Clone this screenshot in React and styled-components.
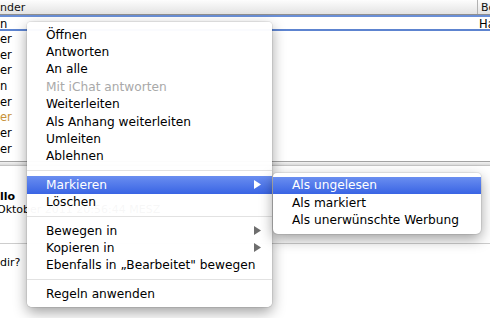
import React from 'react'
import styled, { createGlobalStyle } from 'styled-components'

const GlobalStyle = createGlobalStyle`
  html, body {
    margin: 0;
    padding: 0;
    background: #fff;
  }
  body {
    font-family: "DejaVu Sans", "Liberation Sans", sans-serif;
    overflow: hidden;
  }
`

const rows = [
  { from: 'n', subject: 'Ha', selected: true },
  { from: 'er' },
  { from: 'er' },
  { from: 'er' },
  { from: 'n' },
  { from: 'er' },
  { from: 'er', color: '#c8923a' },
  { from: 'er' },
  { from: 'er' },
]

const menu = [
  { label: 'Öffnen' },
  { label: 'Antworten' },
  { label: 'An alle' },
  { label: 'Mit iChat antworten', disabled: true },
  { label: 'Weiterleiten' },
  { label: 'Als Anhang weiterleiten' },
  { label: 'Umleiten' },
  { label: 'Ablehnen' },
  { sep: true },
  { label: 'Markieren', sub: true, active: true },
  { label: 'Löschen' },
  { sep: true },
  { label: 'Bewegen in', sub: true },
  { label: 'Kopieren in', sub: true },
  { label: 'Ebenfalls in „Bearbeitet" bewegen' },
  { sep: true },
  { label: 'Regeln anwenden' },
]

const submenu = [
  { label: 'Als ungelesen', active: true },
  { label: 'Als markiert' },
  { label: 'Als unerwünschte Werbung' },
]

const Window = styled.div`
  position: relative;
  width: 490px;
  height: 318px;
  overflow: hidden;
  background: #fff;
  display: flex;
  flex-direction: column;
`

const Header = styled.div`
  display: grid;
  grid-template-columns: 477px 1fr;
  height: 14px;
  background: linear-gradient(#fdfdfd, #e3e3e3);
  border-bottom: 1px solid #8f8f8f;
  font-size: 11px;
  color: #111;
`

const HeaderCell = styled.div`
  display: flex;
  align-items: center;
  padding-left: ${(p) => (p.$divider ? 3 : 0)}px;
  border-left: ${(p) => (p.$divider ? '1px solid #b2b2b2' : 'none')};
  overflow: hidden;
  white-space: nowrap;
`

const List = styled.div`
  height: 146px;
  display: flex;
  flex-direction: column;
`

const Row = styled.div`
  box-sizing: border-box;
  display: grid;
  grid-template-columns: 479px 1fr;
  align-items: center;
  height: ${(p) => (p.$selected ? 16 : 15.7)}px;
  font-size: 11.5px;
  color: ${(p) => p.$color || '#000'};
  border-top: ${(p) => (p.$selected ? '2px solid #6a8fd6' : 'none')};
  border-bottom: ${(p) => (p.$selected ? '2px solid #5d84d0' : 'none')};
  white-space: nowrap;
  overflow: hidden;
`

const Splitter = styled.div`
  height: 3px;
  border-top: 1px solid #a2a2a2;
  border-bottom: 1px solid #c4c4c4;
  background: linear-gradient(#f2f2f2, #dadada);
`

const Preview = styled.div`
  display: flex;
  flex-direction: column;
  font-size: 11px;
  color: #000;
`

const Subject = styled.div`
  margin-top: 24px;
  line-height: 13px;
  font-weight: bold;
`

const DateLine = styled.div`
  line-height: 13px;
  white-space: nowrap;
  text-indent: -3px;
`

const Rule = styled.div`
  margin-top: 27px;
  height: 1px;
  background: #cdcdcd;
`

const Body = styled.div`
  margin-top: 12px;
  line-height: 13px;
`

const Menu = styled.div`
  position: absolute;
  left: 27px;
  top: 22px;
  width: 245px;
  padding: 4px 0 5px;
  background: rgba(255, 255, 255, 0.97);
  border-radius: 4px 4px 5px 5px;
  box-shadow: 0 5px 14px rgba(0, 0, 0, 0.38), 0 0 0 1px rgba(0, 0, 0, 0.07);
  font-size: 12.2px;
`

const Submenu = styled(Menu)`
  left: 273px;
  top: 173px;
  width: 208px;
  padding: 3.5px 0 5px;
  background: #fff;
  z-index: 2;
`

const Item = styled.div`
  display: flex;
  align-items: center;
  justify-content: space-between;
  height: 17.4px;
  padding: 0 11px 0 19px;
  color: ${(p) => (p.$active ? '#fff' : p.$disabled ? '#a9a9a9' : '#000')};
  background: ${(p) =>
    p.$active ? 'linear-gradient(#6a8ef0, #3964e4)' : 'transparent'};
  white-space: nowrap;
`

const Separator = styled.div`
  height: 1px;
  margin: 5px 0;
  background: #e2e2e2;
`

const Arrow = ({ color }) => (
  <svg width="7" height="9" viewBox="0 0 7 9">
    <path d="M0 0 L7 4.5 L0 9 Z" fill={color} />
  </svg>
)

export default function App() {
  return (
    <>
      <GlobalStyle />
      <Window>
        <Header>
          <HeaderCell>nder</HeaderCell>
          <HeaderCell $divider>Be</HeaderCell>
        </Header>
        <List>
          {rows.map((r, i) => (
            <Row key={i} $selected={r.selected} $color={r.color}>
              <span>{r.from}</span>
              <span>{r.subject}</span>
            </Row>
          ))}
        </List>
        <Splitter />
        <Preview>
          <Subject>llo</Subject>
          <DateLine>Oktober 2011 20:56:44 MESZ</DateLine>
          <Rule />
          <Body>dir?</Body>
        </Preview>

        <Menu>
          {menu.map((m, i) =>
            m.sep ? (
              <Separator key={i} />
            ) : (
              <Item key={i} $active={m.active} $disabled={m.disabled}>
                <span>{m.label}</span>
                {m.sub && <Arrow color={m.active ? '#fff' : '#6e6e6e'} />}
              </Item>
            )
          )}
        </Menu>
        <Submenu>
          {submenu.map((m, i) => (
            <Item key={i} $active={m.active}>
              <span>{m.label}</span>
            </Item>
          ))}
        </Submenu>
      </Window>
    </>
  )
}
